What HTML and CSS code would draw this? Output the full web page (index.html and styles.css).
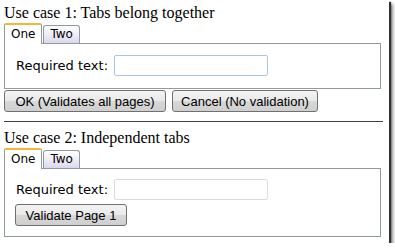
FILE: index.html
```html
<!DOCTYPE html>
<html lang="en">
<head>
    <meta charset="UTF-8">
    <title>Tabs validation</title>
    <link rel="stylesheet" href="styles.css">
</head>
<body>
    <div class="frame">
        <div class="case-title">Use case 1: Tabs belong together</div>
        <div class="tabs">
            <div class="tab active">One</div>
            <div class="tab">Two</div>
        </div>
        <div class="panel panel-one">
            <div class="field">
                <label class="field-label">Required text:</label>
                <input class="text-input" type="text">
            </div>
        </div>
        <div class="actions">
            <button class="btn btn-ok">OK (Validates all pages)</button>
            <button class="btn btn-cancel">Cancel (No validation)</button>
        </div>

        <div class="divider"></div>

        <div class="case-title second">Use case 2: Independent tabs</div>
        <div class="tabs">
            <div class="tab active">One</div>
            <div class="tab">Two</div>
        </div>
        <div class="panel panel-two">
            <div class="field">
                <label class="field-label">Required text:</label>
                <input class="text-input plain" type="text">
            </div>
            <button class="btn btn-page">Validate Page 1</button>
        </div>
    </div>
</body>
</html>
```

FILE: styles.css
```css
body {
    margin: 0;
    background-color: #ffffff;
    font-family: "DejaVu Sans", Verdana, sans-serif;
}
.frame {
    width: 381px;
    height: 238px;
    padding: 4px 4px 1px 4px;
    background-color: #ffffff;
    box-shadow: 2px 2px 1px #333333, 4px 4px 3px rgba(0, 0, 0, 0.45);
}
.case-title {
    font-family: "Liberation Serif", "Times New Roman", serif;
    font-size: 16px;
    line-height: 18px;
    height: 19px;
    color: #000000;
}
.case-title.second {
    margin-top: 7px;
}
.tabs {
    display: flex;
    align-items: flex-end;
    gap: 1px;
    height: 20px;
}
.tab {
    font-size: 12px;
    line-height: 16px;
    height: 17px;
    padding: 0 6px;
    border: 1px solid #919b9c;
    border-bottom: none;
    border-radius: 3px 3px 0 0;
    background: linear-gradient(#ffffff, #e7e5f4 70%, #d9d7ec);
    color: #000000;
}
.tab.active {
    position: relative;
    height: 19px;
    line-height: 19px;
    margin-bottom: -1px;
    border-top: 2px solid #f5b638;
    border-radius: 2px 2px 0 0;
    background: #ffffff;
    z-index: 1;
}
.panel {
    border: 1px solid #919b9c;
    width: 377px;
}
.panel-one {
    padding: 11px 0 0 11px;
    box-sizing: border-box;
    height: 46px;
}
.panel-two {
    height: 69px;
    box-sizing: border-box;
    padding: 10px 0 0 9px;
    display: flex;
    flex-direction: column;
    align-items: flex-start;
    gap: 4px;
}
.field {
    display: flex;
    align-items: center;
    gap: 6px;
}
.field-label {
    font-size: 13px;
    color: #000000;
}
.panel-two .field-label {
    padding-left: 2px;
}
.text-input {
    width: 154px;
    height: 21px;
    box-sizing: border-box;
    border: 1px solid #a9c7e3;
    border-radius: 2px;
    margin: 0;
    padding: 0 3px;
    background: #ffffff;
}
.text-input.plain {
    border-color: #dcdcdc;
}
.actions {
    display: flex;
    gap: 6px;
    margin-top: 1px;
}
.btn {
    font-family: "Liberation Sans", Arial, sans-serif;
    font-size: 13px;
    height: 22px;
    box-sizing: border-box;
    padding: 0;
    white-space: nowrap;
    border: 1px solid #707070;
    border-radius: 3px;
    background: linear-gradient(#f3f3f3, #e9e9e9 50%, #d8d8d8 51%, #cfcfcf);
    color: #000000;
    margin: 0;
}
.btn-ok {
    width: 162px;
}
.btn-cancel {
    width: 146px;
}
.btn-page {
    width: 112px;
    margin-left: 1px;
}
.divider {
    height: 1px;
    background-color: #404040;
    width: 379px;
    margin-top: 9px;
}
```
